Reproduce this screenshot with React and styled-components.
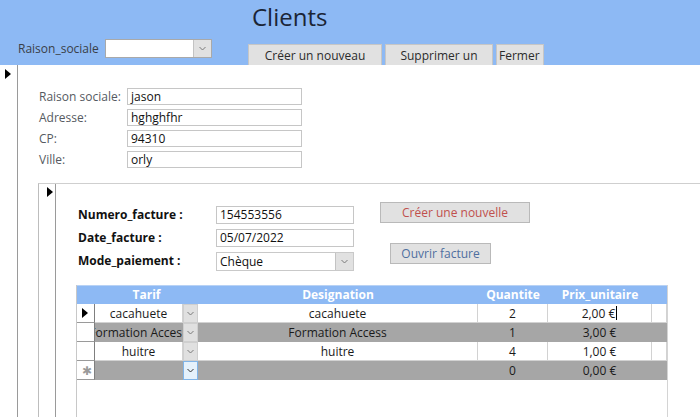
import React from "react";
import styled, { createGlobalStyle } from "styled-components";

const GlobalStyle = createGlobalStyle`
  html, body {
    margin: 0;
    padding: 0;
    background: #ffffff;
  }
  body {
    font-family: "Open Sans", "Noto Sans", sans-serif;
    font-size: 12px;
    color: #222;
  }
`;

const Page = styled.div`
  width: 700px;
  height: 417px;
  overflow: hidden;
  display: flex;
  flex-direction: column;
  background: #fff;
`;

const Header = styled.div`
  height: 65px;
  background: #8db9f4;
  display: flex;
  flex-direction: column;
  justify-content: space-between;
  flex-shrink: 0;
`;

const Title = styled.div`
  padding: 2px 0 0 252px;
  font-size: 24px;
  line-height: 30px;
  color: #1b2536;
`;

const ToolRow = styled.div`
  display: flex;
  align-items: flex-end;
  padding-left: 18px;
`;

const SearchLabel = styled.span`
  color: #3a3f48;
  font-size: 12px;
  margin-bottom: 8px;
  width: 87px;
`;

const Combo = styled.div`
  display: flex;
  width: ${(p) => p.width}px;
  height: ${(p) => p.height}px;
  box-sizing: border-box;
  border: 1px solid ${(p) => (p.light ? "#c9c9c9" : "#a9a9a9")};
  background: #fff;
  margin-bottom: ${(p) => p.mb || 0}px;
`;

const ComboText = styled.div`
  flex: 1;
  padding-left: 3px;
  line-height: ${(p) => p.lh || 16}px;
  font-size: 12px;
  color: #111;
`;

const DropButton = styled.div`
  width: ${(p) => p.w || 17}px;
  box-sizing: border-box;
  border-left: 1px solid #c3c3c3;
  background: #e1e1e1;
  display: flex;
  align-items: center;
  justify-content: center;
`;

const ToolButton = styled.button`
  height: 21px;
  width: ${(p) => p.width}px;
  margin-left: ${(p) => p.ml}px;
  box-sizing: border-box;
  border: 1px solid #c6c6c6;
  border-bottom: none;
  background: #e1e1e1;
  font-family: inherit;
  font-size: 12px;
  color: #2b2b2b;
  padding: 0;
  text-align: ${(p) => (p.left ? "left" : "center")};
  padding-left: ${(p) => (p.left ? 2 : 0)}px;
`;

const Body = styled.div`
  flex: 1;
  display: flex;
  min-height: 0;
`;

const Selector = styled.div`
  width: ${(p) => p.w}px;
  flex-shrink: 0;
  box-sizing: border-box;
  border-right: 1px solid #9a9a9a;
  padding: ${(p) => p.pt}px 0 0 ${(p) => p.pl}px;
`;

const Triangle = styled.div`
  width: 0;
  height: 0;
  border-top: 5px solid transparent;
  border-bottom: 5px solid transparent;
  border-left: 6px solid #000;
`;

const Main = styled.div`
  flex: 1;
  display: flex;
  flex-direction: column;
  min-width: 0;
`;

const ClientFields = styled.div`
  display: grid;
  grid-template-columns: 88px 175px;
  row-gap: 4px;
  padding: 23px 0 0 21px;
`;

const FieldLabel = styled.div`
  color: ${(p) => (p.bold ? "#111" : "#555a61")};
  font-size: 12px;
  line-height: 17px;
  font-weight: ${(p) => (p.bold ? 700 : 400)};
`;

const TextBox = styled.div`
  height: ${(p) => p.h || 17}px;
  box-sizing: border-box;
  border: 1px solid #c6c6c6;
  padding-left: 3px;
  line-height: ${(p) => (p.h || 17) - 2}px;
  font-size: 12px;
  color: #111;
  background: #fff;
`;

const SubForm = styled.div`
  flex: 1;
  margin: 15px 0 0 20px;
  border-top: 1px solid #cfcfcf;
  border-left: 1px solid #bdbdbd;
  display: flex;
  min-height: 0;
`;

const SubMain = styled.div`
  flex: 1;
  display: flex;
  flex-direction: column;
  min-width: 0;
`;

const SubTop = styled.div`
  display: flex;
  padding: 18px 0 0 22px;
`;

const InvoiceFields = styled.div`
  display: grid;
  grid-template-columns: 138px 138px;
  grid-template-rows: 18px 18px 19px;
  row-gap: 5px;
  padding-top: 4px;
`;

const ActionColumn = styled.div`
  display: flex;
  flex-direction: column;
  margin-left: 26px;
`;

const ActionButton = styled.button`
  width: ${(p) => p.width}px;
  height: 21px;
  margin: ${(p) => p.mt}px 0 0 ${(p) => p.ml}px;
  box-sizing: border-box;
  border: 1px solid #b9b9b9;
  background: #e1e1e1;
  font-family: inherit;
  font-size: 12px;
  color: ${(p) => p.color};
  padding: 0;
`;

const Sheet = styled.div`
  flex: 1;
  margin: 14px 0 0 20px;
  width: 592px;
  box-sizing: border-box;
  border-left: 1px solid #c8c8c8;
  border-right: 1px solid #d4d4d4;
  display: grid;
  grid-template-columns: 18px 88px 15px 280px 70px 104px 15px;
  grid-auto-rows: 19px;
  align-content: start;
`;

const HeadCell = styled.div`
  background: #8db9f4;
  color: #fff;
  font-weight: 700;
  font-size: 12px;
  line-height: 18px;
  text-align: center;
  grid-column: span ${(p) => p.span || 1};
  border-top: 1px solid #b8d2f5;
`;

const Cell = styled.div`
  box-sizing: border-box;
  display: flex;
  align-items: center;
  justify-content: center;
  background: ${(p) => (p.gray ? "#a6a6a6" : "#fff")};
  border-right: 1px solid ${(p) => (p.gray ? "#a6a6a6" : "#d2d2d2")};
  border-bottom: 1px solid ${(p) => (p.gray ? "#a6a6a6" : "#d2d2d2")};
  font-size: 12px;
  white-space: nowrap;
  overflow: hidden;
  color: #1a1a1a;
`;

const RowSel = styled.div`
  box-sizing: border-box;
  background: #fff;
  border-right: 1px solid #7f7f7f;
  border-bottom: 1px solid #9a9a9a;
  display: flex;
  align-items: center;
  padding-left: 5px;
  color: #9a9a9a;
  font-size: 12px;
`;

const DropCell = styled.div`
  box-sizing: border-box;
  background: ${(p) => (p.active ? "#e5f1fb" : "#e0e0e0")};
  border: 1px solid ${(p) => (p.active ? "#7fb4e8" : "#cfcfcf")};
  display: flex;
  align-items: center;
  justify-content: center;
`;

const Caret = styled.span`
  display: inline-block;
  width: 1px;
  height: 14px;
  background: #000;
  margin-left: 1px;
`;

const Chevron = ({ color = "#7a7a7a" }) => (
  <svg width="7" height="5" viewBox="0 0 7 5">
    <polyline points="0.5,1 3.5,4 6.5,1" fill="none" stroke={color} strokeWidth="1" />
  </svg>
);

const lines = [
  { sel: "current", tarif: "cacahuete", des: "cacahuete", qty: "2", prix: "2,00 €", gray: false },
  { sel: "", tarif: "Formation Access", des: "Formation Access", qty: "1", prix: "3,00 €", gray: true },
  { sel: "", tarif: "huitre", des: "huitre", qty: "4", prix: "1,00 €", gray: false },
  { sel: "new", tarif: "", des: "", qty: "0", prix: "0,00 €", gray: true },
];

export default function App() {
  return (
    <Page>
      <GlobalStyle />
      <Header>
        <Title>Clients</Title>
        <ToolRow>
          <SearchLabel>Raison_sociale</SearchLabel>
          <Combo width={107} height={19} mb={7}>
            <ComboText />
            <DropButton w={18}>
              <Chevron />
            </DropButton>
          </Combo>
          <ToolButton width={134} ml={36}>Créer un nouveau</ToolButton>
          <ToolButton width={108} ml={3}>Supprimer un</ToolButton>
          <ToolButton width={48} ml={3} left>Fermer</ToolButton>
        </ToolRow>
      </Header>

      <Body>
        <Selector w={18} pt={4} pl={5}>
          <Triangle />
        </Selector>
        <Main>
          <ClientFields>
            <FieldLabel>Raison sociale:</FieldLabel>
            <TextBox>jason</TextBox>
            <FieldLabel>Adresse:</FieldLabel>
            <TextBox>hghghfhr</TextBox>
            <FieldLabel>CP:</FieldLabel>
            <TextBox>94310</TextBox>
            <FieldLabel>Ville:</FieldLabel>
            <TextBox>orly</TextBox>
          </ClientFields>

          <SubForm>
            <Selector w={17} pt={3} pl={8}>
              <Triangle />
            </Selector>
            <SubMain>
              <SubTop>
                <InvoiceFields>
                  <FieldLabel bold>Numero_facture :</FieldLabel>
                  <TextBox h={18}>154553556</TextBox>
                  <FieldLabel bold>Date_facture :</FieldLabel>
                  <TextBox h={18}>05/07/2022</TextBox>
                  <FieldLabel bold>Mode_paiement :</FieldLabel>
                  <Combo width={138} height={19} light>
                    <ComboText lh={17}>Chèque</ComboText>
                    <DropButton w={18}>
                      <Chevron />
                    </DropButton>
                  </Combo>
                </InvoiceFields>
                <ActionColumn>
                  <ActionButton width={150} mt={0} ml={0} color="#c0504d">
                    Créer une nouvelle
                  </ActionButton>
                  <ActionButton width={101} mt={20} ml={10} color="#4f6f9f">
                    Ouvrir facture
                  </ActionButton>
                </ActionColumn>
              </SubTop>

              <Sheet>
                <HeadCell />
                <HeadCell span={2}>Tarif</HeadCell>
                <HeadCell>Designation</HeadCell>
                <HeadCell>Quantite</HeadCell>
                <HeadCell>Prix_unitaire</HeadCell>
                <HeadCell />
                {lines.map((l, i) => (
                  <React.Fragment key={i}>
                    <RowSel>
                      {l.sel === "current" && <Triangle />}
                      {l.sel === "new" && "✱"}
                    </RowSel>
                    <Cell gray={l.gray}>{l.tarif}</Cell>
                    <DropCell active={l.sel === "new"}>
                      <Chevron color={l.sel === "new" ? "#333" : "#7a7a7a"} />
                    </DropCell>
                    <Cell gray={l.gray}>{l.des}</Cell>
                    <Cell gray={l.gray}>{l.qty}</Cell>
                    <Cell gray={l.gray}>
                      {l.prix}
                      {l.sel === "current" && <Caret />}
                    </Cell>
                    <Cell gray={l.gray} />
                  </React.Fragment>
                ))}
              </Sheet>
            </SubMain>
          </SubForm>
        </Main>
      </Body>
    </Page>
  );
}
